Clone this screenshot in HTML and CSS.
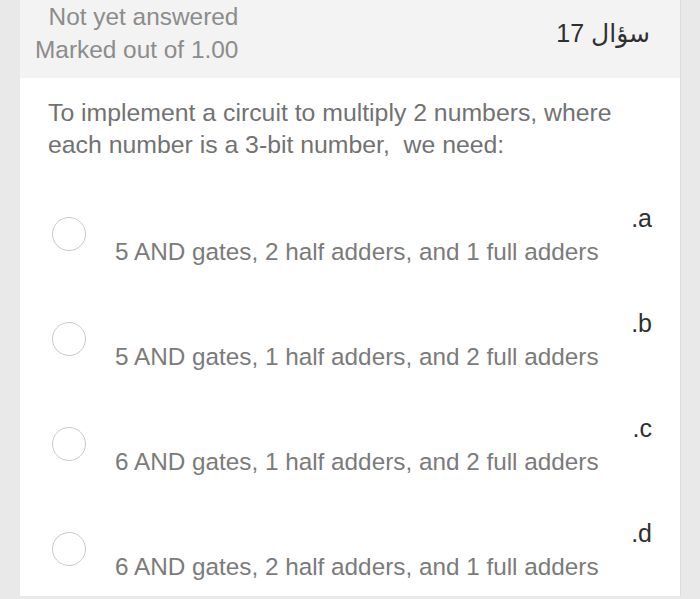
FILE: index.html
```html
<!DOCTYPE html>
<html lang="ar" dir="rtl">
<head>
<meta charset="utf-8">
<title>سؤال 17</title>
<link rel="stylesheet" href="styles.css">
</head>
<body>
<div class="card">
  <div class="head">
    <div class="qno">سؤال 17</div>
    <div class="info">
      <div dir="ltr">Not yet answered</div>
      <div dir="ltr">Marked out of 1.00</div>
    </div>
  </div>
  <div class="content">
    <p class="qtext" dir="ltr">To implement a circuit to multiply 2 numbers, where each number is a 3-bit number,&nbsp; we need:</p>
    <div class="answers">
      <div class="opt">
        <span class="num">a.</span>
        <span class="ans" dir="ltr"><span class="radio"></span><span class="txt">5 AND gates, 2 half adders, and 1 full adders</span></span>
      </div>
      <div class="opt">
        <span class="num">b.</span>
        <span class="ans" dir="ltr"><span class="radio"></span><span class="txt">5 AND gates, 1 half adders, and 2 full adders</span></span>
      </div>
      <div class="opt">
        <span class="num">c.</span>
        <span class="ans" dir="ltr"><span class="radio"></span><span class="txt">6 AND gates, 1 half adders, and 2 full adders</span></span>
      </div>
      <div class="opt">
        <span class="num">d.</span>
        <span class="ans" dir="ltr"><span class="radio"></span><span class="txt">6 AND gates, 2 half adders, and 1 full adders</span></span>
      </div>
    </div>
  </div>
</div>
</body>
</html>
```
FILE: styles.css
```css
html, body {
  margin: 0;
  padding: 0;
}
body {
  background: #e9e9e9;
  font-family: "Liberation Sans", "DejaVu Sans", sans-serif;
  height: 599px;
  overflow: hidden;
}
.card {
  margin: 0 20px;
  width: 660px;
  height: 596px;
  overflow: hidden;
  background: #fff;
  box-shadow: 1px 0 0 #dcdcdc;
}
.head {
  height: 78px;
  background: #f3f3f3;
  display: flex;
  justify-content: space-between;
  align-items: flex-start;
  padding: 0 30px 0 15px;
}
.qno {
  font-size: 25px;
  line-height: 30px;
  margin-top: 18px;
  color: #2f2f2f;
}
.info {
  text-align: right;
  font-size: 24.4px;
  line-height: 33px;
  color: #8c8c8c;
}
.content {
  padding: 19px 28px 0 28px;
}
.qtext {
  margin: 0;
  font-size: 24.8px;
  line-height: 32px;
  color: #727272;
}
.answers {
  margin-top: 44px;
}
.opt {
  height: 105px;
  display: flex;
  align-items: flex-start;
}
.num {
  font-size: 25px;
  line-height: 26px;
  color: #2f2f2f;
}
.ans {
  margin-right: auto;
  display: flex;
  align-items: flex-start;
  padding-left: 4px;
}
.radio {
  width: 32px;
  height: 32px;
  border: 1.5px solid #c9c9c9;
  border-radius: 50%;
  margin-top: 12px;
  flex: none;
}
.txt {
  margin-left: 29px;
  margin-top: 34px;
  font-size: 24.3px;
  line-height: 26px;
  color: #7b7b7b;
}
```
